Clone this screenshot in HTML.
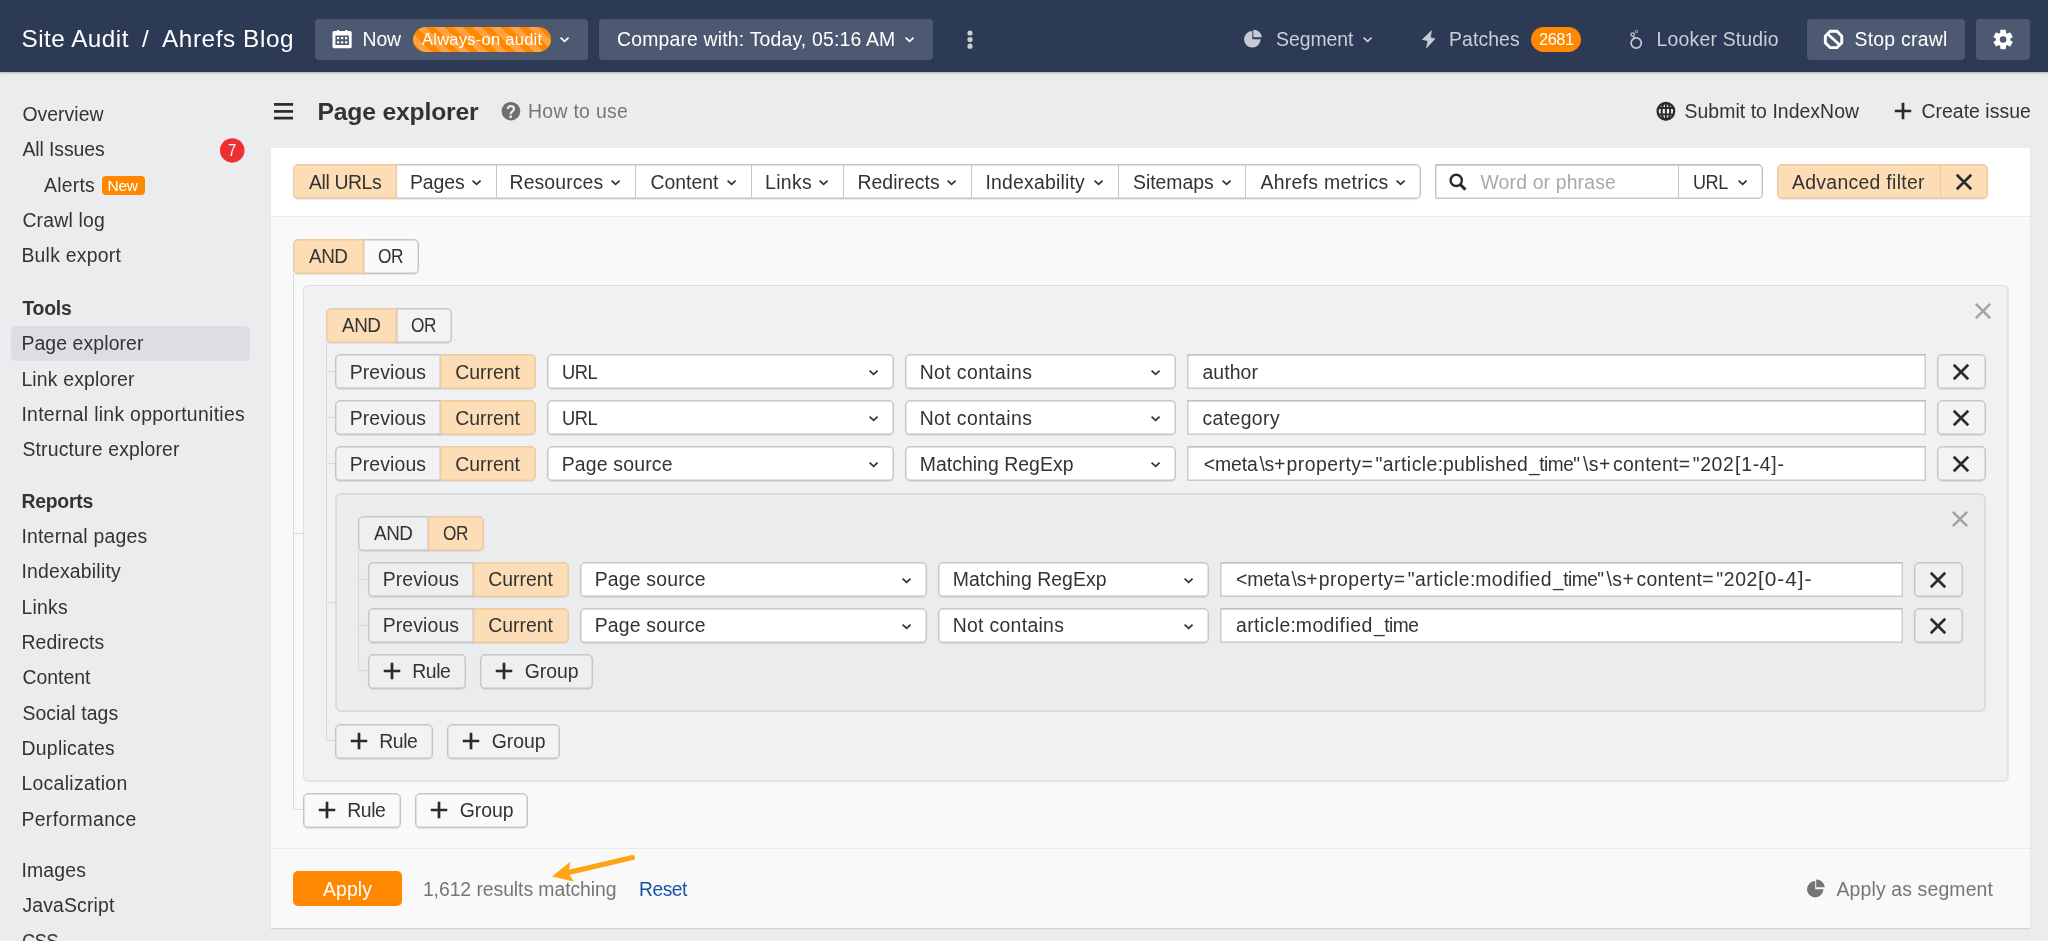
<!DOCTYPE html>
<html lang="en"><head><meta charset="utf-8"><title>Page explorer</title><style>html,body{margin:0;padding:0;background:#ebecee;}
#root{position:relative;width:2048px;height:941px;overflow:hidden;background:#ebecee;font-family:"Liberation Sans",sans-serif;}
#root>div,#root>svg,#tx>span{position:absolute;}
#tx{left:0;top:0;width:2048px;height:941px;will-change:transform;}
#tx>span{white-space:pre;display:block;transform-origin:0 50%;}
svg{overflow:visible;}</style></head><body><div id="root">
<div style="left:0px;top:0px;width:2048px;height:72px;background:#2d3a55;box-shadow:0 1px 2px rgba(0,0,0,.25);"></div>
<div style="left:315px;top:19px;width:273px;height:41px;background:#4d5871;border-radius:4px;"></div>
<div style="left:413px;top:27px;width:138px;height:24.5px;border-radius:13px;background:repeating-linear-gradient(45deg,#ff8800 0 6.6px,#ffa23f 6.6px 13.2px);"></div>
<div style="left:599px;top:19px;width:334px;height:41px;background:#4d5871;border-radius:4px;"></div>
<div style="left:1531px;top:27px;width:49.5px;height:24.5px;background:#ff8800;border-radius:13px;"></div>
<div style="left:1807px;top:19px;width:158px;height:41px;background:#4d5871;border-radius:4px;"></div>
<div style="left:1976px;top:19px;width:54px;height:41px;background:#4d5871;border-radius:4px;"></div>
<div style="left:11px;top:326px;width:239px;height:35px;background:#dcdee3;border-radius:5px;"></div>
<svg style="left:218px;top:136px" width="28" height="28" viewBox="218 136 28 28"><circle cx="232.25" cy="150.45" r="12.25" fill="#ec2f30"/></svg>
<div style="left:102px;top:176px;width:43px;height:19px;background:#ff8800;border-radius:4px;"></div>
<div style="left:271px;top:148px;width:1759px;height:780px;background:#f9f9f9;box-shadow:0 1px 1px rgba(0,0,0,.10);"></div>
<div style="left:271px;top:148px;width:1759px;height:68px;background:#fff;"></div>
<div style="left:271px;top:216px;width:1759px;height:1px;background:#ebebeb;"></div>
<div style="left:271px;top:848px;width:1759px;height:1px;background:#ebebeb;"></div>
<div style="left:293px;top:164px;width:1128px;height:35px;box-sizing:border-box;background:#fff;border:1px solid #c6c6c9;border-radius:5px;box-shadow:0 1px 1px rgba(0,0,0,.08),inset 0 0 0 .45px #c6c6c9;"></div>
<div style="left:293px;top:164px;width:104px;height:35px;box-sizing:border-box;background:#fdddb5;border:1px solid #eccaa2;border-radius:5px 0 0 5px;box-shadow:inset 0 0 0 .45px #eccaa2;"></div>
<div style="left:496px;top:165px;width:1px;height:33px;background:#c6c6c9;"></div>
<div style="left:635px;top:165px;width:1px;height:33px;background:#c6c6c9;"></div>
<div style="left:751px;top:165px;width:1px;height:33px;background:#c6c6c9;"></div>
<div style="left:843px;top:165px;width:1px;height:33px;background:#c6c6c9;"></div>
<div style="left:971px;top:165px;width:1px;height:33px;background:#c6c6c9;"></div>
<div style="left:1118px;top:165px;width:1px;height:33px;background:#c6c6c9;"></div>
<div style="left:1245px;top:165px;width:1px;height:33px;background:#c6c6c9;"></div>
<div style="left:1435px;top:164px;width:328px;height:35px;box-sizing:border-box;background:#fff;border:1px solid #c6c6c9;border-radius:1px 5px 5px 1px;box-shadow:0 1px 1px rgba(0,0,0,.08),inset 0 0 0 .45px #c6c6c9;border-top-color:#bdbdbf;box-shadow:inset 0 1px 1px rgba(0,0,0,.08),inset 0 0 0 .45px #c6c6c9;"></div>
<div style="left:1678px;top:165px;width:1px;height:33px;background:#c6c6c9;"></div>
<div style="left:1777px;top:164px;width:211px;height:35px;box-sizing:border-box;background:#fdddb5;border:1px solid #eccaa2;border-radius:5px;box-shadow:0 1px 1px rgba(0,0,0,.08),inset 0 0 0 .45px #eccaa2;"></div>
<div style="left:1940px;top:165px;width:1px;height:33px;background:#eccaa2;"></div>
<div style="left:293px;top:274px;width:1px;height:536px;background:#d8d9db;"></div>
<div style="left:293px;top:533px;width:10px;height:1px;background:#d8d9db;"></div>
<div style="left:293px;top:809px;width:10px;height:1px;background:#d8d9db;"></div>
<div style="left:363px;top:239px;width:56px;height:35px;box-sizing:border-box;background:#fafafa;border:1px solid #c6c6c9;border-radius:0 5px 5px 0;box-shadow:0 1px 1px rgba(0,0,0,.08),inset 0 0 0 .45px #c6c6c9;"></div>
<div style="left:293px;top:239px;width:71px;height:35px;box-sizing:border-box;background:#fdddb5;border:1px solid #eccaa2;border-radius:5px 0 0 5px;box-shadow:0 1px 1px rgba(0,0,0,.08),inset 0 0 0 .45px #eccaa2;"></div>
<div style="left:303px;top:285px;width:1706px;height:497px;box-sizing:border-box;background:#f0f1f3;border:solid #dcdee1;border-width:1px 2px 2px 1px;border-color:#dcdee1 #e2e3e6 #e2e3e6 #dcdee1;border-radius:6px;"></div>
<div style="left:326px;top:343px;width:1px;height:398px;background:#d8d9db;"></div>
<div style="left:326px;top:371px;width:9px;height:1px;background:#d8d9db;"></div>
<div style="left:326px;top:417px;width:9px;height:1px;background:#d8d9db;"></div>
<div style="left:326px;top:463px;width:9px;height:1px;background:#d8d9db;"></div>
<div style="left:326px;top:602px;width:9px;height:1px;background:#d8d9db;"></div>
<div style="left:326px;top:740px;width:9px;height:1px;background:#d8d9db;"></div>
<div style="left:396px;top:308px;width:56px;height:35px;box-sizing:border-box;background:#f2f3f5;border:1px solid #c6c6c9;border-radius:0 5px 5px 0;box-shadow:0 1px 1px rgba(0,0,0,.08),inset 0 0 0 .45px #c6c6c9;"></div>
<div style="left:326px;top:308px;width:71px;height:35px;box-sizing:border-box;background:#fdddb5;border:1px solid #eccaa2;border-radius:5px 0 0 5px;box-shadow:0 1px 1px rgba(0,0,0,.08),inset 0 0 0 .45px #eccaa2;"></div>
<div style="left:335px;top:354px;width:106px;height:35px;box-sizing:border-box;background:#f2f3f5;border:1px solid #c6c6c9;border-radius:5px 0 0 5px;box-shadow:0 1px 1px rgba(0,0,0,.08),inset 0 0 0 .45px #c6c6c9;"></div>
<div style="left:440px;top:354px;width:96px;height:35px;box-sizing:border-box;background:#fdddb5;border:1px solid #eccaa2;border-radius:0 5px 5px 0;box-shadow:0 1px 1px rgba(0,0,0,.08),inset 0 0 0 .45px #eccaa2;"></div>
<div style="left:547px;top:354px;width:347px;height:35px;box-sizing:border-box;background:#fff;border:1px solid #c6c6c9;border-radius:5px;box-shadow:0 1px 1px rgba(0,0,0,.08),inset 0 0 0 .45px #c6c6c9;"></div>
<div style="left:905px;top:354px;width:271px;height:35px;box-sizing:border-box;background:#fff;border:1px solid #c6c6c9;border-radius:5px;box-shadow:0 1px 1px rgba(0,0,0,.08),inset 0 0 0 .45px #c6c6c9;"></div>
<div style="left:1187px;top:354px;width:739px;height:35px;box-sizing:border-box;background:#fff;border:1px solid #cbcbcd;border-radius:1px;box-shadow:inset 0 0 0 .45px #cbcbcd;border-top-color:#bfbfc1;box-shadow:inset 0 1px 1px rgba(0,0,0,.07),inset 0 0 0 .45px #cbcbcd;"></div>
<div style="left:1937px;top:354px;width:49px;height:35px;box-sizing:border-box;background:#f2f3f5;border:1px solid #c6c6c9;border-radius:5px;box-shadow:0 1px 1px rgba(0,0,0,.08),inset 0 0 0 .45px #c6c6c9;"></div>
<div style="left:335px;top:400px;width:106px;height:35px;box-sizing:border-box;background:#f2f3f5;border:1px solid #c6c6c9;border-radius:5px 0 0 5px;box-shadow:0 1px 1px rgba(0,0,0,.08),inset 0 0 0 .45px #c6c6c9;"></div>
<div style="left:440px;top:400px;width:96px;height:35px;box-sizing:border-box;background:#fdddb5;border:1px solid #eccaa2;border-radius:0 5px 5px 0;box-shadow:0 1px 1px rgba(0,0,0,.08),inset 0 0 0 .45px #eccaa2;"></div>
<div style="left:547px;top:400px;width:347px;height:35px;box-sizing:border-box;background:#fff;border:1px solid #c6c6c9;border-radius:5px;box-shadow:0 1px 1px rgba(0,0,0,.08),inset 0 0 0 .45px #c6c6c9;"></div>
<div style="left:905px;top:400px;width:271px;height:35px;box-sizing:border-box;background:#fff;border:1px solid #c6c6c9;border-radius:5px;box-shadow:0 1px 1px rgba(0,0,0,.08),inset 0 0 0 .45px #c6c6c9;"></div>
<div style="left:1187px;top:400px;width:739px;height:35px;box-sizing:border-box;background:#fff;border:1px solid #cbcbcd;border-radius:1px;box-shadow:inset 0 0 0 .45px #cbcbcd;border-top-color:#bfbfc1;box-shadow:inset 0 1px 1px rgba(0,0,0,.07),inset 0 0 0 .45px #cbcbcd;"></div>
<div style="left:1937px;top:400px;width:49px;height:35px;box-sizing:border-box;background:#f2f3f5;border:1px solid #c6c6c9;border-radius:5px;box-shadow:0 1px 1px rgba(0,0,0,.08),inset 0 0 0 .45px #c6c6c9;"></div>
<div style="left:335px;top:446px;width:106px;height:35px;box-sizing:border-box;background:#f2f3f5;border:1px solid #c6c6c9;border-radius:5px 0 0 5px;box-shadow:0 1px 1px rgba(0,0,0,.08),inset 0 0 0 .45px #c6c6c9;"></div>
<div style="left:440px;top:446px;width:96px;height:35px;box-sizing:border-box;background:#fdddb5;border:1px solid #eccaa2;border-radius:0 5px 5px 0;box-shadow:0 1px 1px rgba(0,0,0,.08),inset 0 0 0 .45px #eccaa2;"></div>
<div style="left:547px;top:446px;width:347px;height:35px;box-sizing:border-box;background:#fff;border:1px solid #c6c6c9;border-radius:5px;box-shadow:0 1px 1px rgba(0,0,0,.08),inset 0 0 0 .45px #c6c6c9;"></div>
<div style="left:905px;top:446px;width:271px;height:35px;box-sizing:border-box;background:#fff;border:1px solid #c6c6c9;border-radius:5px;box-shadow:0 1px 1px rgba(0,0,0,.08),inset 0 0 0 .45px #c6c6c9;"></div>
<div style="left:1187px;top:446px;width:739px;height:35px;box-sizing:border-box;background:#fff;border:1px solid #cbcbcd;border-radius:1px;box-shadow:inset 0 0 0 .45px #cbcbcd;border-top-color:#bfbfc1;box-shadow:inset 0 1px 1px rgba(0,0,0,.07),inset 0 0 0 .45px #cbcbcd;"></div>
<div style="left:1937px;top:446px;width:49px;height:35px;box-sizing:border-box;background:#f2f3f5;border:1px solid #c6c6c9;border-radius:5px;box-shadow:0 1px 1px rgba(0,0,0,.08),inset 0 0 0 .45px #c6c6c9;"></div>
<div style="left:335px;top:493px;width:1651px;height:219px;box-sizing:border-box;background:#ebecee;border:solid #dcdcde;border-width:2px;border-radius:6px;"></div>
<div style="left:358px;top:551px;width:1px;height:120px;background:#d8d9db;"></div>
<div style="left:358px;top:579px;width:10px;height:1px;background:#d8d9db;"></div>
<div style="left:358px;top:625px;width:10px;height:1px;background:#d8d9db;"></div>
<div style="left:358px;top:670px;width:10px;height:1px;background:#d8d9db;"></div>
<div style="left:358px;top:516px;width:71px;height:35px;box-sizing:border-box;background:#eeeff1;border:1px solid #c6c6c9;border-radius:5px 0 0 5px;box-shadow:0 1px 1px rgba(0,0,0,.08),inset 0 0 0 .45px #c6c6c9;"></div>
<div style="left:428px;top:516px;width:56px;height:35px;box-sizing:border-box;background:#fdddb5;border:1px solid #eccaa2;border-radius:0 5px 5px 0;box-shadow:0 1px 1px rgba(0,0,0,.08),inset 0 0 0 .45px #eccaa2;"></div>
<div style="left:368px;top:562px;width:106px;height:35px;box-sizing:border-box;background:#eeeff1;border:1px solid #c6c6c9;border-radius:5px 0 0 5px;box-shadow:0 1px 1px rgba(0,0,0,.08),inset 0 0 0 .45px #c6c6c9;"></div>
<div style="left:473px;top:562px;width:96px;height:35px;box-sizing:border-box;background:#fdddb5;border:1px solid #eccaa2;border-radius:0 5px 5px 0;box-shadow:0 1px 1px rgba(0,0,0,.08),inset 0 0 0 .45px #eccaa2;"></div>
<div style="left:580px;top:562px;width:347px;height:35px;box-sizing:border-box;background:#fff;border:1px solid #c6c6c9;border-radius:5px;box-shadow:0 1px 1px rgba(0,0,0,.08),inset 0 0 0 .45px #c6c6c9;"></div>
<div style="left:938px;top:562px;width:271px;height:35px;box-sizing:border-box;background:#fff;border:1px solid #c6c6c9;border-radius:5px;box-shadow:0 1px 1px rgba(0,0,0,.08),inset 0 0 0 .45px #c6c6c9;"></div>
<div style="left:1220px;top:562px;width:683px;height:35px;box-sizing:border-box;background:#fff;border:1px solid #cbcbcd;border-radius:1px;box-shadow:inset 0 0 0 .45px #cbcbcd;border-top-color:#bfbfc1;box-shadow:inset 0 1px 1px rgba(0,0,0,.07),inset 0 0 0 .45px #cbcbcd;"></div>
<div style="left:1914px;top:562px;width:49px;height:35px;box-sizing:border-box;background:#eeeff1;border:1px solid #c6c6c9;border-radius:5px;box-shadow:0 1px 1px rgba(0,0,0,.08),inset 0 0 0 .45px #c6c6c9;"></div>
<div style="left:368px;top:608px;width:106px;height:35px;box-sizing:border-box;background:#eeeff1;border:1px solid #c6c6c9;border-radius:5px 0 0 5px;box-shadow:0 1px 1px rgba(0,0,0,.08),inset 0 0 0 .45px #c6c6c9;"></div>
<div style="left:473px;top:608px;width:96px;height:35px;box-sizing:border-box;background:#fdddb5;border:1px solid #eccaa2;border-radius:0 5px 5px 0;box-shadow:0 1px 1px rgba(0,0,0,.08),inset 0 0 0 .45px #eccaa2;"></div>
<div style="left:580px;top:608px;width:347px;height:35px;box-sizing:border-box;background:#fff;border:1px solid #c6c6c9;border-radius:5px;box-shadow:0 1px 1px rgba(0,0,0,.08),inset 0 0 0 .45px #c6c6c9;"></div>
<div style="left:938px;top:608px;width:271px;height:35px;box-sizing:border-box;background:#fff;border:1px solid #c6c6c9;border-radius:5px;box-shadow:0 1px 1px rgba(0,0,0,.08),inset 0 0 0 .45px #c6c6c9;"></div>
<div style="left:1220px;top:608px;width:683px;height:35px;box-sizing:border-box;background:#fff;border:1px solid #cbcbcd;border-radius:1px;box-shadow:inset 0 0 0 .45px #cbcbcd;border-top-color:#bfbfc1;box-shadow:inset 0 1px 1px rgba(0,0,0,.07),inset 0 0 0 .45px #cbcbcd;"></div>
<div style="left:1914px;top:608px;width:49px;height:35px;box-sizing:border-box;background:#eeeff1;border:1px solid #c6c6c9;border-radius:5px;box-shadow:0 1px 1px rgba(0,0,0,.08),inset 0 0 0 .45px #c6c6c9;"></div>
<div style="left:368px;top:654px;width:98px;height:35px;box-sizing:border-box;background:#eeeff1;border:1px solid #c6c6c9;border-radius:5px;box-shadow:0 1px 1px rgba(0,0,0,.08),inset 0 0 0 .45px #c6c6c9;"></div>
<div style="left:480px;top:654px;width:113px;height:35px;box-sizing:border-box;background:#eeeff1;border:1px solid #c6c6c9;border-radius:5px;box-shadow:0 1px 1px rgba(0,0,0,.08),inset 0 0 0 .45px #c6c6c9;"></div>
<div style="left:335px;top:724px;width:98px;height:35px;box-sizing:border-box;background:#f2f3f5;border:1px solid #c6c6c9;border-radius:5px;box-shadow:0 1px 1px rgba(0,0,0,.08),inset 0 0 0 .45px #c6c6c9;"></div>
<div style="left:447px;top:724px;width:113px;height:35px;box-sizing:border-box;background:#f2f3f5;border:1px solid #c6c6c9;border-radius:5px;box-shadow:0 1px 1px rgba(0,0,0,.08),inset 0 0 0 .45px #c6c6c9;"></div>
<div style="left:303px;top:793px;width:98px;height:35px;box-sizing:border-box;background:#fafafa;border:1px solid #c6c6c9;border-radius:5px;box-shadow:0 1px 1px rgba(0,0,0,.08),inset 0 0 0 .45px #c6c6c9;"></div>
<div style="left:415px;top:793px;width:113px;height:35px;box-sizing:border-box;background:#fafafa;border:1px solid #c6c6c9;border-radius:5px;box-shadow:0 1px 1px rgba(0,0,0,.08),inset 0 0 0 .45px #c6c6c9;"></div>
<div style="left:293px;top:871px;width:109px;height:35px;background:#ff8800;border-radius:5px;"></div>
<svg style="left:867.2px;top:367.55px" width="13.2" height="8.9" viewBox="-2 -2 13.2 8.9"><path d="M0.6 0.6 L4.6 4.300000000000001 L8.6 0.6" fill="none" stroke="#333" stroke-width="1.75" stroke-linecap="butt" stroke-linejoin="miter"/></svg>
<svg style="left:1149.2px;top:367.55px" width="13.2" height="8.9" viewBox="-2 -2 13.2 8.9"><path d="M0.6 0.6 L4.6 4.300000000000001 L8.6 0.6" fill="none" stroke="#333" stroke-width="1.75" stroke-linecap="butt" stroke-linejoin="miter"/></svg>
<svg style="left:1949.2px;top:359.9px" width="24" height="24" viewBox="-12 -12 24 24"><path d="M-7.254999999999999 -7.254999999999999 L7.254999999999999 7.254999999999999 M7.254999999999999 -7.254999999999999 L-7.254999999999999 7.254999999999999" stroke="#2b2b2b" stroke-width="2.7" stroke-linecap="butt" fill="none"/></svg>
<svg style="left:867.2px;top:413.55px" width="13.2" height="8.9" viewBox="-2 -2 13.2 8.9"><path d="M0.6 0.6 L4.6 4.300000000000001 L8.6 0.6" fill="none" stroke="#333" stroke-width="1.75" stroke-linecap="butt" stroke-linejoin="miter"/></svg>
<svg style="left:1149.2px;top:413.55px" width="13.2" height="8.9" viewBox="-2 -2 13.2 8.9"><path d="M0.6 0.6 L4.6 4.300000000000001 L8.6 0.6" fill="none" stroke="#333" stroke-width="1.75" stroke-linecap="butt" stroke-linejoin="miter"/></svg>
<svg style="left:1949.2px;top:405.9px" width="24" height="24" viewBox="-12 -12 24 24"><path d="M-7.254999999999999 -7.254999999999999 L7.254999999999999 7.254999999999999 M7.254999999999999 -7.254999999999999 L-7.254999999999999 7.254999999999999" stroke="#2b2b2b" stroke-width="2.7" stroke-linecap="butt" fill="none"/></svg>
<svg style="left:867.2px;top:459.55px" width="13.2" height="8.9" viewBox="-2 -2 13.2 8.9"><path d="M0.6 0.6 L4.6 4.300000000000001 L8.6 0.6" fill="none" stroke="#333" stroke-width="1.75" stroke-linecap="butt" stroke-linejoin="miter"/></svg>
<svg style="left:1149.2px;top:459.55px" width="13.2" height="8.9" viewBox="-2 -2 13.2 8.9"><path d="M0.6 0.6 L4.6 4.300000000000001 L8.6 0.6" fill="none" stroke="#333" stroke-width="1.75" stroke-linecap="butt" stroke-linejoin="miter"/></svg>
<svg style="left:1949.2px;top:451.9px" width="24" height="24" viewBox="-12 -12 24 24"><path d="M-7.254999999999999 -7.254999999999999 L7.254999999999999 7.254999999999999 M7.254999999999999 -7.254999999999999 L-7.254999999999999 7.254999999999999" stroke="#2b2b2b" stroke-width="2.7" stroke-linecap="butt" fill="none"/></svg>
<svg style="left:1970.9px;top:298.9px" width="24" height="24" viewBox="-12 -12 24 24"><path d="M-7.125 -7.125 L7.125 7.125 M7.125 -7.125 L-7.125 7.125" stroke="#a3a3a3" stroke-width="2.5" stroke-linecap="butt" fill="none"/></svg>
<svg style="left:900.2px;top:575.55px" width="13.2" height="8.9" viewBox="-2 -2 13.2 8.9"><path d="M0.6 0.6 L4.6 4.300000000000001 L8.6 0.6" fill="none" stroke="#333" stroke-width="1.75" stroke-linecap="butt" stroke-linejoin="miter"/></svg>
<svg style="left:1182.2px;top:575.55px" width="13.2" height="8.9" viewBox="-2 -2 13.2 8.9"><path d="M0.6 0.6 L4.6 4.300000000000001 L8.6 0.6" fill="none" stroke="#333" stroke-width="1.75" stroke-linecap="butt" stroke-linejoin="miter"/></svg>
<svg style="left:1926.2px;top:567.9px" width="24" height="24" viewBox="-12 -12 24 24"><path d="M-7.254999999999999 -7.254999999999999 L7.254999999999999 7.254999999999999 M7.254999999999999 -7.254999999999999 L-7.254999999999999 7.254999999999999" stroke="#2b2b2b" stroke-width="2.7" stroke-linecap="butt" fill="none"/></svg>
<svg style="left:900.2px;top:621.55px" width="13.2" height="8.9" viewBox="-2 -2 13.2 8.9"><path d="M0.6 0.6 L4.6 4.300000000000001 L8.6 0.6" fill="none" stroke="#333" stroke-width="1.75" stroke-linecap="butt" stroke-linejoin="miter"/></svg>
<svg style="left:1182.2px;top:621.55px" width="13.2" height="8.9" viewBox="-2 -2 13.2 8.9"><path d="M0.6 0.6 L4.6 4.300000000000001 L8.6 0.6" fill="none" stroke="#333" stroke-width="1.75" stroke-linecap="butt" stroke-linejoin="miter"/></svg>
<svg style="left:1926.2px;top:613.9px" width="24" height="24" viewBox="-12 -12 24 24"><path d="M-7.254999999999999 -7.254999999999999 L7.254999999999999 7.254999999999999 M7.254999999999999 -7.254999999999999 L-7.254999999999999 7.254999999999999" stroke="#2b2b2b" stroke-width="2.7" stroke-linecap="butt" fill="none"/></svg>
<svg style="left:1948px;top:506.79999999999995px" width="24" height="24" viewBox="-12 -12 24 24"><path d="M-7.125 -7.125 L7.125 7.125 M7.125 -7.125 L-7.125 7.125" stroke="#a3a3a3" stroke-width="2.5" stroke-linecap="butt" fill="none"/></svg>
<svg style="left:379.9px;top:659.0px" width="24" height="24" viewBox="-12 -12 24 24"><path d="M-8.25 0 L8.25 0 M0 -8.25 L0 8.25" stroke="#2b2b2b" stroke-width="2.7" fill="none"/></svg>
<svg style="left:491.9px;top:659.0px" width="24" height="24" viewBox="-12 -12 24 24"><path d="M-8.25 0 L8.25 0 M0 -8.25 L0 8.25" stroke="#2b2b2b" stroke-width="2.7" fill="none"/></svg>
<svg style="left:346.9px;top:729.0px" width="24" height="24" viewBox="-12 -12 24 24"><path d="M-8.25 0 L8.25 0 M0 -8.25 L0 8.25" stroke="#2b2b2b" stroke-width="2.7" fill="none"/></svg>
<svg style="left:458.9px;top:729.0px" width="24" height="24" viewBox="-12 -12 24 24"><path d="M-8.25 0 L8.25 0 M0 -8.25 L0 8.25" stroke="#2b2b2b" stroke-width="2.7" fill="none"/></svg>
<svg style="left:314.9px;top:798.0px" width="24" height="24" viewBox="-12 -12 24 24"><path d="M-8.25 0 L8.25 0 M0 -8.25 L0 8.25" stroke="#2b2b2b" stroke-width="2.7" fill="none"/></svg>
<svg style="left:426.9px;top:798.0px" width="24" height="24" viewBox="-12 -12 24 24"><path d="M-8.25 0 L8.25 0 M0 -8.25 L0 8.25" stroke="#2b2b2b" stroke-width="2.7" fill="none"/></svg>
<svg style="left:557.8px;top:35.349999999999994px" width="13.2" height="8.9" viewBox="-2 -2 13.2 8.9"><path d="M0.6 0.6 L4.6 4.300000000000001 L8.6 0.6" fill="none" stroke="#fff" stroke-width="1.75" stroke-linecap="butt" stroke-linejoin="miter"/></svg>
<svg style="left:902.8px;top:35.349999999999994px" width="13.2" height="8.9" viewBox="-2 -2 13.2 8.9"><path d="M0.6 0.6 L4.6 4.300000000000001 L8.6 0.6" fill="none" stroke="#fff" stroke-width="1.75" stroke-linecap="butt" stroke-linejoin="miter"/></svg>
<svg style="left:1361px;top:35.349999999999994px" width="13.2" height="8.9" viewBox="-2 -2 13.2 8.9"><path d="M0.6 0.6 L4.6 4.300000000000001 L8.6 0.6" fill="none" stroke="#c9ced7" stroke-width="1.75" stroke-linecap="butt" stroke-linejoin="miter"/></svg>
<svg style="left:469.7px;top:177.75px" width="13.2" height="8.9" viewBox="-2 -2 13.2 8.9"><path d="M0.6 0.6 L4.6 4.300000000000001 L8.6 0.6" fill="none" stroke="#333" stroke-width="1.75" stroke-linecap="butt" stroke-linejoin="miter"/></svg>
<svg style="left:609.2px;top:177.75px" width="13.2" height="8.9" viewBox="-2 -2 13.2 8.9"><path d="M0.6 0.6 L4.6 4.300000000000001 L8.6 0.6" fill="none" stroke="#333" stroke-width="1.75" stroke-linecap="butt" stroke-linejoin="miter"/></svg>
<svg style="left:725.2px;top:177.75px" width="13.2" height="8.9" viewBox="-2 -2 13.2 8.9"><path d="M0.6 0.6 L4.6 4.300000000000001 L8.6 0.6" fill="none" stroke="#333" stroke-width="1.75" stroke-linecap="butt" stroke-linejoin="miter"/></svg>
<svg style="left:817.2px;top:177.75px" width="13.2" height="8.9" viewBox="-2 -2 13.2 8.9"><path d="M0.6 0.6 L4.6 4.300000000000001 L8.6 0.6" fill="none" stroke="#333" stroke-width="1.75" stroke-linecap="butt" stroke-linejoin="miter"/></svg>
<svg style="left:945.2px;top:177.75px" width="13.2" height="8.9" viewBox="-2 -2 13.2 8.9"><path d="M0.6 0.6 L4.6 4.300000000000001 L8.6 0.6" fill="none" stroke="#333" stroke-width="1.75" stroke-linecap="butt" stroke-linejoin="miter"/></svg>
<svg style="left:1092.2px;top:177.75px" width="13.2" height="8.9" viewBox="-2 -2 13.2 8.9"><path d="M0.6 0.6 L4.6 4.300000000000001 L8.6 0.6" fill="none" stroke="#333" stroke-width="1.75" stroke-linecap="butt" stroke-linejoin="miter"/></svg>
<svg style="left:1219.7px;top:177.75px" width="13.2" height="8.9" viewBox="-2 -2 13.2 8.9"><path d="M0.6 0.6 L4.6 4.300000000000001 L8.6 0.6" fill="none" stroke="#333" stroke-width="1.75" stroke-linecap="butt" stroke-linejoin="miter"/></svg>
<svg style="left:1394.2px;top:177.75px" width="13.2" height="8.9" viewBox="-2 -2 13.2 8.9"><path d="M0.6 0.6 L4.6 4.300000000000001 L8.6 0.6" fill="none" stroke="#333" stroke-width="1.75" stroke-linecap="butt" stroke-linejoin="miter"/></svg>
<svg style="left:1736.2px;top:177.75px" width="13.2" height="8.9" viewBox="-2 -2 13.2 8.9"><path d="M0.6 0.6 L4.6 4.300000000000001 L8.6 0.6" fill="none" stroke="#333" stroke-width="1.75" stroke-linecap="butt" stroke-linejoin="miter"/></svg>
<svg style="left:1952px;top:169.8px" width="24" height="24" viewBox="-12 -12 24 24"><path d="M-7.254999999999999 -7.254999999999999 L7.254999999999999 7.254999999999999 M7.254999999999999 -7.254999999999999 L-7.254999999999999 7.254999999999999" stroke="#2b2b2b" stroke-width="2.7" stroke-linecap="butt" fill="none"/></svg>
<svg style="left:330px;top:27px" width="24" height="23" viewBox="330 27 24 23"><path fill="#fff" fill-rule="evenodd" d="M334 30.9 h2.9 v-1 h2.1 v1 h6.2 v-1 h2.1 v1 h2.9 a1.5 1.5 0 0 1 1.5 1.5 v14.3 a1.5 1.5 0 0 1 -1.5 1.5 h-16.2 a1.5 1.5 0 0 1 -1.5 -1.5 v-14.3 a1.5 1.5 0 0 1 1.5 -1.5 z M335.4 35.5 v9.6 h13.5 v-9.6 z"/><rect x="337.09999999999997" y="37.0" width="2.2" height="2.2" fill="#fff"/><rect x="337.09999999999997" y="41.199999999999996" width="2.2" height="2.2" fill="#fff"/><rect x="341.04999999999995" y="37.0" width="2.2" height="2.2" fill="#fff"/><rect x="341.04999999999995" y="41.199999999999996" width="2.2" height="2.2" fill="#fff"/><rect x="345.0" y="37.0" width="2.2" height="2.2" fill="#fff"/><rect x="345.0" y="41.199999999999996" width="2.2" height="2.2" fill="#fff"/></svg>
<svg style="left:965px;top:28px" width="10" height="24" viewBox="965 28 10 24"><circle cx="970" cy="33" r="2.6" fill="#c9ced7"/><circle cx="970" cy="39.6" r="2.6" fill="#c9ced7"/><circle cx="970" cy="46.2" r="2.6" fill="#c9ced7"/></svg>
<svg style="left:1241.8px;top:27.05px" width="22.6" height="22.6" viewBox="1241.8 27.05 22.6 22.6"><path fill="#c5cad3" d="M1252.1 39.35 L1252.1 31.05 A8.3 8.3 0 1 0 1260.3999999999999 39.35 Z"/><path fill="#c5cad3" d="M1253.1 37.35 L1253.1 29.75 A8.3 8.3 0 0 1 1261.75 37.35 Z"/></svg>
<svg style="left:1805.1px;top:877.1999999999999px" width="22.4" height="22.4" viewBox="1805.1 877.1999999999999 22.4 22.4"><path fill="#757575" d="M1815.3 889.4 L1815.3 881.1999999999999 A8.2 8.2 0 1 0 1823.5 889.4 Z"/><path fill="#757575" d="M1816.3 887.4 L1816.3 879.8 A8.3 8.3 0 0 1 1824.95 887.4 Z"/></svg>
<svg style="left:1420px;top:29px" width="18" height="21" viewBox="1420 29 18 21"><path fill="#c5cad3" stroke="#c5cad3" stroke-width="0.8" stroke-linejoin="round" d="M1431.4 30.9 L1430.2 37.6 L1434.8 38.9 L1426.6 47.8 L1428 40.6 L1422.4 39.5 Z"/></svg>
<svg style="left:1628px;top:29px" width="14" height="22" viewBox="1628 29 14 22"><circle cx="1636.2" cy="43" r="5.1" fill="none" stroke="#c5cad3" stroke-width="1.7"/><circle cx="1632.7" cy="34.6" r="1.8" fill="none" stroke="#c5cad3" stroke-width="1.2"/><circle cx="1636.5" cy="31.5" r="1.1" fill="none" stroke="#c5cad3" stroke-width="0.9"/><path d="M1633.3 35.5 L1634.6 39.2" stroke="#c5cad3" stroke-width="1.2" fill="none"/></svg>
<svg style="left:1822px;top:28px" width="24" height="24" viewBox="1822 28 24 24"><path fill="#fff" fill-rule="evenodd" d="M1843.20 43.40 L1837.55 49.05 L1829.55 49.05 L1823.90 43.40 L1823.90 35.40 L1829.55 29.75 L1837.55 29.75 L1843.20 35.40 Z M1840.30 42.20 L1836.35 46.15 L1830.75 46.15 L1826.80 42.20 L1826.80 36.60 L1830.75 32.65 L1836.35 32.65 L1840.30 36.60 Z"/><path d="M1827.35 33.8 L1839.75 45.0" stroke="#fff" stroke-width="2.7"/></svg>
<svg style="left:1991px;top:27px" width="24" height="25" viewBox="1991 27 24 25"><g fill="#fff"><rect x="2000.25" y="29.750000000000004" width="5.7" height="19.4" rx="0.8" transform="rotate(0 2003.1 39.45)"/><rect x="2000.25" y="29.750000000000004" width="5.7" height="19.4" rx="0.8" transform="rotate(60 2003.1 39.45)"/><rect x="2000.25" y="29.750000000000004" width="5.7" height="19.4" rx="0.8" transform="rotate(120 2003.1 39.45)"/><circle cx="2003.1" cy="39.45" r="7.2"/></g><circle cx="2003.1" cy="39.45" r="3.3" fill="#4d5871"/></svg>
<svg style="left:272px;top:100px" width="24" height="22" viewBox="272 100 24 22"><rect x="274" y="103.05000000000001" width="19.1" height="2.7" fill="#2b2b2b"/><rect x="274" y="110.05000000000001" width="19.1" height="2.7" fill="#2b2b2b"/><rect x="274" y="116.75" width="19.1" height="2.7" fill="#2b2b2b"/></svg>
<svg style="left:500px;top:100px" width="22" height="22" viewBox="500 100 22 22"><circle cx="510.9" cy="111.2" r="9.3" fill="#6f6f71"/></svg>
<svg style="left:1655px;top:100px" width="22" height="22" viewBox="1655 100 22 22"><g fill="none" stroke="#2b2b2b"><circle cx="1665.9" cy="111.2" r="8.3" stroke-width="2.3"/><ellipse cx="1665.9" cy="111.2" rx="4.3" ry="8.3" stroke-width="1.9"/><path d="M1665.9 102.8 V119.6 M1658 108 H1673.8 M1658 114.4 H1673.8" stroke-width="1.9"/></g></svg>
<svg style="left:1890.7px;top:99.4px" width="24" height="24" viewBox="-12 -12 24 24"><path d="M-8.2 0 L8.2 0 M0 -8.2 L0 8.2" stroke="#2b2b2b" stroke-width="2.7" fill="none"/></svg>
<svg style="left:1447px;top:171px" width="22" height="22" viewBox="1447 171 22 22"><circle cx="1456.25" cy="180.4" r="5.65" fill="none" stroke="#2b2b2b" stroke-width="2.4"/><path d="M1460.3 184.5 L1465.4 189.6" stroke="#2b2b2b" stroke-width="3"/></svg>
<svg style="left:545px;top:850px" width="95" height="36" viewBox="545 850 95 36"><path d="M632.5 857.5 L562 874" stroke="#ffa412" stroke-width="5" stroke-linecap="round" fill="none"/><path d="M552 876.6 L570.3 861.8 L568.5 873 L573.6 881.4 Z" fill="#ffa412"/></svg>
<div id="tx">
<span style="left:21.60px;top:27px;font-size:24.3px;line-height:24.3px;letter-spacing:0.461px;color:#fff;font-weight:400;">Site Audit</span>
<span style="left:142.00px;top:27px;font-size:24.3px;line-height:24.3px;letter-spacing:0.000px;color:#fff;font-weight:400;">/</span>
<span style="left:162.00px;top:27px;font-size:24.3px;line-height:24.3px;letter-spacing:0.591px;color:#fff;font-weight:400;">Ahrefs Blog</span>
<span style="left:362.60px;top:30px;font-size:19.4px;line-height:19.4px;letter-spacing:-0.194px;color:#fff;font-weight:400;">Now</span>
<span style="left:422.00px;top:31px;font-size:16.5px;line-height:16.5px;letter-spacing:0.258px;color:#fff;font-weight:400;">Always-on audit</span>
<span style="left:617.00px;top:30px;font-size:19.4px;line-height:19.4px;letter-spacing:0.185px;color:#fff;font-weight:400;">Compare with: Today, 05:16 AM</span>
<span style="left:1276.00px;top:30px;font-size:19.4px;line-height:19.4px;letter-spacing:-0.037px;color:#c9ced7;font-weight:400;">Segment</span>
<span style="left:1449.00px;top:30px;font-size:19.4px;line-height:19.4px;letter-spacing:0.105px;color:#c9ced7;font-weight:400;">Patches</span>
<span style="left:1538.50px;top:31px;font-size:16.5px;line-height:16.5px;letter-spacing:-0.450px;color:#fff;font-weight:400;transform:scaleX(0.9949);">2681</span>
<span style="left:1656.60px;top:30px;font-size:19.4px;line-height:19.4px;letter-spacing:0.194px;color:#c9ced7;font-weight:400;">Looker Studio</span>
<span style="left:1854.50px;top:30px;font-size:19.4px;line-height:19.4px;letter-spacing:0.254px;color:#fff;font-weight:400;">Stop crawl</span>
<span style="left:317.50px;top:100px;font-size:24.7px;line-height:24.7px;letter-spacing:-0.182px;color:#333;font-weight:700;">Page explorer</span>
<span style="left:528.00px;top:102px;font-size:19.4px;line-height:19.4px;letter-spacing:0.309px;color:#767676;font-weight:400;">How to use</span>
<span style="left:1684.50px;top:102px;font-size:19.4px;line-height:19.4px;letter-spacing:0.058px;color:#333;font-weight:400;">Submit to IndexNow</span>
<span style="left:1921.50px;top:102px;font-size:19.4px;line-height:19.4px;letter-spacing:0.039px;color:#333;font-weight:400;">Create issue</span>
<span style="left:22.40px;top:105px;font-size:19.4px;line-height:19.4px;letter-spacing:0.042px;color:#333;font-weight:400;">Overview</span>
<span style="left:22.40px;top:140px;font-size:19.4px;line-height:19.4px;letter-spacing:-0.076px;color:#333;font-weight:400;">All Issues</span>
<span style="left:22.40px;top:211px;font-size:19.4px;line-height:19.4px;letter-spacing:0.196px;color:#333;font-weight:400;">Crawl log</span>
<span style="left:21.40px;top:246px;font-size:19.4px;line-height:19.4px;letter-spacing:0.249px;color:#333;font-weight:400;">Bulk export</span>
<span style="left:21.40px;top:334px;font-size:19.4px;line-height:19.4px;letter-spacing:0.111px;color:#333;font-weight:400;">Page explorer</span>
<span style="left:21.40px;top:370px;font-size:19.4px;line-height:19.4px;letter-spacing:0.170px;color:#333;font-weight:400;">Link explorer</span>
<span style="left:21.40px;top:405px;font-size:19.4px;line-height:19.4px;letter-spacing:0.297px;color:#333;font-weight:400;">Internal link opportunities</span>
<span style="left:22.40px;top:440px;font-size:19.4px;line-height:19.4px;letter-spacing:0.173px;color:#333;font-weight:400;">Structure explorer</span>
<span style="left:21.40px;top:527px;font-size:19.4px;line-height:19.4px;letter-spacing:0.223px;color:#333;font-weight:400;">Internal pages</span>
<span style="left:21.40px;top:562px;font-size:19.4px;line-height:19.4px;letter-spacing:0.208px;color:#333;font-weight:400;">Indexability</span>
<span style="left:21.40px;top:598px;font-size:19.4px;line-height:19.4px;letter-spacing:0.257px;color:#333;font-weight:400;">Links</span>
<span style="left:21.40px;top:633px;font-size:19.4px;line-height:19.4px;letter-spacing:0.112px;color:#333;font-weight:400;">Redirects</span>
<span style="left:22.40px;top:668px;font-size:19.4px;line-height:19.4px;letter-spacing:0.012px;color:#333;font-weight:400;">Content</span>
<span style="left:22.40px;top:704px;font-size:19.4px;line-height:19.4px;letter-spacing:0.084px;color:#333;font-weight:400;">Social tags</span>
<span style="left:21.40px;top:739px;font-size:19.4px;line-height:19.4px;letter-spacing:0.307px;color:#333;font-weight:400;">Duplicates</span>
<span style="left:21.40px;top:774px;font-size:19.4px;line-height:19.4px;letter-spacing:0.307px;color:#333;font-weight:400;">Localization</span>
<span style="left:21.40px;top:810px;font-size:19.4px;line-height:19.4px;letter-spacing:0.378px;color:#333;font-weight:400;">Performance</span>
<span style="left:21.40px;top:861px;font-size:19.4px;line-height:19.4px;letter-spacing:0.202px;color:#333;font-weight:400;">Images</span>
<span style="left:22.40px;top:896px;font-size:19.4px;line-height:19.4px;letter-spacing:0.163px;color:#333;font-weight:400;">JavaScript</span>
<span style="left:22.40px;top:932px;font-size:19.4px;line-height:19.4px;letter-spacing:-0.450px;color:#333;font-weight:400;transform:scaleX(0.9376);">CSS</span>
<span style="left:44.00px;top:176px;font-size:19.4px;line-height:19.4px;letter-spacing:0.226px;color:#333;font-weight:400;">Alerts</span>
<span style="left:22.40px;top:299px;font-size:19.4px;line-height:19.4px;letter-spacing:-0.220px;color:#333;font-weight:700;">Tools</span>
<span style="left:21.40px;top:492px;font-size:19.4px;line-height:19.4px;letter-spacing:-0.230px;color:#333;font-weight:700;">Reports</span>
<span style="left:228.10px;top:143px;font-size:16px;line-height:16px;letter-spacing:0.000px;color:#fff;font-weight:400;transform:scaleX(0.9333);">7</span>
<span style="left:107.60px;top:178px;font-size:15.5px;line-height:15.5px;letter-spacing:-0.307px;color:#fff;font-weight:400;">New</span>
<span style="left:309.00px;top:173px;font-size:19.4px;line-height:19.4px;letter-spacing:-0.390px;color:#333;font-weight:400;">All URLs</span>
<span style="left:410.00px;top:173px;font-size:19.4px;line-height:19.4px;letter-spacing:-0.071px;color:#333;font-weight:400;">Pages</span>
<span style="left:509.50px;top:173px;font-size:19.4px;line-height:19.4px;letter-spacing:0.127px;color:#333;font-weight:400;">Resources</span>
<span style="left:650.50px;top:173px;font-size:19.4px;line-height:19.4px;letter-spacing:-0.005px;color:#333;font-weight:400;">Content</span>
<span style="left:765.00px;top:173px;font-size:19.4px;line-height:19.4px;letter-spacing:0.357px;color:#333;font-weight:400;">Links</span>
<span style="left:857.50px;top:173px;font-size:19.4px;line-height:19.4px;letter-spacing:0.037px;color:#333;font-weight:400;">Redirects</span>
<span style="left:985.50px;top:173px;font-size:19.4px;line-height:19.4px;letter-spacing:0.199px;color:#333;font-weight:400;">Indexability</span>
<span style="left:1133.00px;top:173px;font-size:19.4px;line-height:19.4px;letter-spacing:-0.019px;color:#333;font-weight:400;">Sitemaps</span>
<span style="left:1260.50px;top:173px;font-size:19.4px;line-height:19.4px;letter-spacing:0.291px;color:#333;font-weight:400;">Ahrefs metrics</span>
<span style="left:1480.50px;top:173px;font-size:19.4px;line-height:19.4px;letter-spacing:0.154px;color:#a9a9a9;font-weight:400;">Word or phrase</span>
<span style="left:1692.57px;top:173px;font-size:19.4px;line-height:19.4px;letter-spacing:-0.450px;color:#333;font-weight:400;transform:scaleX(0.9298);">URL</span>
<span style="left:1792.00px;top:173px;font-size:19.4px;line-height:19.4px;letter-spacing:0.300px;color:#333;font-weight:400;">Advanced filter</span>
<span style="left:309.00px;top:247px;font-size:19.4px;line-height:19.4px;letter-spacing:-0.450px;color:#333;font-weight:400;transform:scaleX(0.9741);">AND</span>
<span style="left:377.50px;top:247px;font-size:19.4px;line-height:19.4px;letter-spacing:-0.450px;color:#333;font-weight:400;transform:scaleX(0.8906);">OR</span>
<span style="left:342.00px;top:316px;font-size:19.4px;line-height:19.4px;letter-spacing:-0.450px;color:#333;font-weight:400;transform:scaleX(0.9741);">AND</span>
<span style="left:410.50px;top:316px;font-size:19.4px;line-height:19.4px;letter-spacing:-0.450px;color:#333;font-weight:400;transform:scaleX(0.8906);">OR</span>
<span style="left:349.70px;top:363px;font-size:19.4px;line-height:19.4px;letter-spacing:0.122px;color:#333;font-weight:400;">Previous</span>
<span style="left:455.30px;top:363px;font-size:19.4px;line-height:19.4px;letter-spacing:0.005px;color:#333;font-weight:400;">Current</span>
<span style="left:561.76px;top:363px;font-size:19.4px;line-height:19.4px;letter-spacing:-0.450px;color:#333;font-weight:400;transform:scaleX(0.9432);">URL</span>
<span style="left:919.70px;top:363px;font-size:19.4px;line-height:19.4px;letter-spacing:0.401px;color:#333;font-weight:400;">Not contains</span>
<span style="left:1202.40px;top:363px;font-size:19.4px;line-height:19.4px;letter-spacing:0.095px;color:#333;font-weight:400;">author</span>
<span style="left:349.70px;top:409px;font-size:19.4px;line-height:19.4px;letter-spacing:0.122px;color:#333;font-weight:400;">Previous</span>
<span style="left:455.30px;top:409px;font-size:19.4px;line-height:19.4px;letter-spacing:0.005px;color:#333;font-weight:400;">Current</span>
<span style="left:561.76px;top:409px;font-size:19.4px;line-height:19.4px;letter-spacing:-0.450px;color:#333;font-weight:400;transform:scaleX(0.9432);">URL</span>
<span style="left:919.70px;top:409px;font-size:19.4px;line-height:19.4px;letter-spacing:0.401px;color:#333;font-weight:400;">Not contains</span>
<span style="left:1202.40px;top:409px;font-size:19.4px;line-height:19.4px;letter-spacing:0.403px;color:#333;font-weight:400;">category</span>
<span style="left:349.70px;top:455px;font-size:19.4px;line-height:19.4px;letter-spacing:0.122px;color:#333;font-weight:400;">Previous</span>
<span style="left:455.30px;top:455px;font-size:19.4px;line-height:19.4px;letter-spacing:0.005px;color:#333;font-weight:400;">Current</span>
<span style="left:561.70px;top:455px;font-size:19.4px;line-height:19.4px;letter-spacing:0.191px;color:#333;font-weight:400;">Page source</span>
<span style="left:919.70px;top:455px;font-size:19.4px;line-height:19.4px;letter-spacing:0.052px;color:#333;font-weight:400;">Matching RegExp</span>
<span style="left:1203.80px;top:455px;font-size:19.4px;line-height:19.4px;letter-spacing:-0.112px;color:#333;font-weight:400;">&lt;meta</span>
<span style="left:1259.40px;top:455px;font-size:19.4px;line-height:19.4px;letter-spacing:-0.191px;color:#333;font-weight:400;">\s+</span>
<span style="left:1286.60px;top:455px;font-size:19.4px;line-height:19.4px;letter-spacing:0.471px;color:#333;font-weight:400;">property=</span>
<span style="left:1375.50px;top:455px;font-size:19.4px;line-height:19.4px;letter-spacing:0.462px;color:#333;font-weight:400;">"article:</span>
<span style="left:1443.00px;top:455px;font-size:19.4px;line-height:19.4px;letter-spacing:0.208px;color:#333;font-weight:400;">published</span>
<span style="left:1528.98px;top:455px;font-size:19.4px;line-height:19.4px;letter-spacing:-0.450px;color:#333;font-weight:400;transform:scaleX(0.9818);">_time"</span>
<span style="left:1582.90px;top:455px;font-size:19.4px;line-height:19.4px;letter-spacing:0.509px;color:#333;font-weight:400;">\s+</span>
<span style="left:1612.90px;top:455px;font-size:19.4px;line-height:19.4px;letter-spacing:0.328px;color:#333;font-weight:400;">content=</span>
<span style="left:1692.70px;top:455px;font-size:19.4px;line-height:19.4px;letter-spacing:0.616px;color:#333;font-weight:400;">"202</span>
<span style="left:1735.00px;top:455px;font-size:19.4px;line-height:19.4px;letter-spacing:0.740px;color:#333;font-weight:400;">[1-4]-</span>
<span style="left:374.00px;top:524px;font-size:19.4px;line-height:19.4px;letter-spacing:-0.450px;color:#333;font-weight:400;transform:scaleX(0.9741);">AND</span>
<span style="left:442.50px;top:524px;font-size:19.4px;line-height:19.4px;letter-spacing:-0.450px;color:#333;font-weight:400;transform:scaleX(0.8906);">OR</span>
<span style="left:382.70px;top:570px;font-size:19.4px;line-height:19.4px;letter-spacing:0.122px;color:#333;font-weight:400;">Previous</span>
<span style="left:488.30px;top:570px;font-size:19.4px;line-height:19.4px;letter-spacing:0.005px;color:#333;font-weight:400;">Current</span>
<span style="left:594.70px;top:570px;font-size:19.4px;line-height:19.4px;letter-spacing:0.191px;color:#333;font-weight:400;">Page source</span>
<span style="left:952.70px;top:570px;font-size:19.4px;line-height:19.4px;letter-spacing:0.052px;color:#333;font-weight:400;">Matching RegExp</span>
<span style="left:1236.00px;top:570px;font-size:19.4px;line-height:19.4px;letter-spacing:-0.112px;color:#333;font-weight:400;">&lt;meta</span>
<span style="left:1291.60px;top:570px;font-size:19.4px;line-height:19.4px;letter-spacing:-0.191px;color:#333;font-weight:400;">\s+</span>
<span style="left:1318.80px;top:570px;font-size:19.4px;line-height:19.4px;letter-spacing:0.471px;color:#333;font-weight:400;">property=</span>
<span style="left:1407.70px;top:570px;font-size:19.4px;line-height:19.4px;letter-spacing:0.462px;color:#333;font-weight:400;">"article:</span>
<span style="left:1475.20px;top:570px;font-size:19.4px;line-height:19.4px;letter-spacing:0.442px;color:#333;font-weight:400;">modified</span>
<span style="left:1552.98px;top:570px;font-size:19.4px;line-height:19.4px;letter-spacing:-0.450px;color:#333;font-weight:400;transform:scaleX(0.9818);">_time"</span>
<span style="left:1606.40px;top:570px;font-size:19.4px;line-height:19.4px;letter-spacing:0.509px;color:#333;font-weight:400;">\s+</span>
<span style="left:1636.40px;top:570px;font-size:19.4px;line-height:19.4px;letter-spacing:0.328px;color:#333;font-weight:400;">content=</span>
<span style="left:1716.30px;top:570px;font-size:19.4px;line-height:19.4px;letter-spacing:0.583px;color:#333;font-weight:400;">"202</span>
<span style="left:1758.42px;top:570px;font-size:19.4px;line-height:19.4px;letter-spacing:0.900px;color:#333;font-weight:400;transform:scaleX(1.0766);">[0-4]-</span>
<span style="left:382.70px;top:616px;font-size:19.4px;line-height:19.4px;letter-spacing:0.122px;color:#333;font-weight:400;">Previous</span>
<span style="left:488.30px;top:616px;font-size:19.4px;line-height:19.4px;letter-spacing:0.005px;color:#333;font-weight:400;">Current</span>
<span style="left:594.70px;top:616px;font-size:19.4px;line-height:19.4px;letter-spacing:0.191px;color:#333;font-weight:400;">Page source</span>
<span style="left:952.70px;top:616px;font-size:19.4px;line-height:19.4px;letter-spacing:0.310px;color:#333;font-weight:400;">Not contains</span>
<span style="left:1236.00px;top:616px;font-size:19.4px;line-height:19.4px;letter-spacing:0.411px;color:#333;font-weight:400;">article:</span>
<span style="left:1295.80px;top:616px;font-size:19.4px;line-height:19.4px;letter-spacing:0.442px;color:#333;font-weight:400;">modified</span>
<span style="left:1373.59px;top:616px;font-size:19.4px;line-height:19.4px;letter-spacing:-0.450px;color:#333;font-weight:400;transform:scaleX(0.9862);">_time</span>
<span style="left:412.30px;top:662px;font-size:19.4px;line-height:19.4px;letter-spacing:-0.450px;color:#333;font-weight:400;">Rule</span>
<span style="left:524.70px;top:662px;font-size:19.4px;line-height:19.4px;letter-spacing:-0.027px;color:#333;font-weight:400;">Group</span>
<span style="left:379.30px;top:732px;font-size:19.4px;line-height:19.4px;letter-spacing:-0.450px;color:#333;font-weight:400;">Rule</span>
<span style="left:491.70px;top:732px;font-size:19.4px;line-height:19.4px;letter-spacing:-0.027px;color:#333;font-weight:400;">Group</span>
<span style="left:347.30px;top:801px;font-size:19.4px;line-height:19.4px;letter-spacing:-0.450px;color:#333;font-weight:400;">Rule</span>
<span style="left:459.70px;top:801px;font-size:19.4px;line-height:19.4px;letter-spacing:-0.027px;color:#333;font-weight:400;">Group</span>
<span style="left:323.00px;top:880px;font-size:19.4px;line-height:19.4px;letter-spacing:0.098px;color:#fff;font-weight:400;">Apply</span>
<span style="left:422.90px;top:880px;font-size:19.4px;line-height:19.4px;letter-spacing:-0.067px;color:#767676;font-weight:400;">1,612 results matching</span>
<span style="left:639.21px;top:880px;font-size:19.4px;line-height:19.4px;letter-spacing:-0.450px;color:#1852ad;font-weight:400;transform:scaleX(0.9904);">Reset</span>
<span style="left:1836.50px;top:880px;font-size:19.4px;line-height:19.4px;letter-spacing:0.150px;color:#767676;font-weight:400;">Apply as segment</span>
<span style="left:506.20px;top:103px;font-size:18px;line-height:18px;letter-spacing:0.000px;color:#ebecee;font-weight:700;transform:scaleX(0.9100);">?</span>
</div>
</div></body></html>
